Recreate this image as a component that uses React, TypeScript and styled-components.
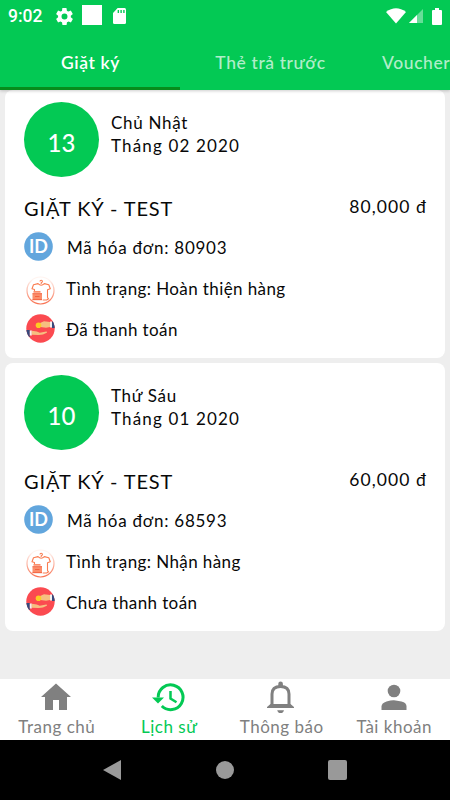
import React from 'react'
import styled, { createGlobalStyle } from 'styled-components'

const GREEN = '#03c954'

const GlobalStyle = createGlobalStyle`
  * {
    box-sizing: border-box;
  }

  body {
    margin: 0;
    background: #eeeeee;
    font-family: Lato, 'Open Sans', sans-serif;
  }

  svg {
    display: block;
    flex: none;
  }
`

const Screen = styled.div`
  width: 450px;
  height: 800px;
  display: flex;
  flex-direction: column;
  overflow: hidden;
  background: #eeeeee;
`

const Header = styled.header`
  position: relative;
  height: 90px;
  background: ${GREEN};
  box-shadow: 0 1px 3px rgba(0, 0, 0, 0.2);
`

const StatusBar = styled.div`
  height: 32px;
  padding: 0 8px;
  display: flex;
  align-items: center;
  justify-content: space-between;
  color: #fff;
`

const StatusGroup = styled.div<{ $gap: number }>`
  display: flex;
  align-items: center;
  gap: ${({ $gap }) => $gap}px;
`

const Clock = styled.span`
  width: 35px;
  margin-right: 3px;
  font: 500 17.5px/32px Roboto, sans-serif;
  white-space: nowrap;
`

const Notice = styled.span`
  width: 20px;
  height: 20px;
  margin: -2px 1px 0 -1px;
  background: #fff;
`

const Tabs = styled.nav`
  height: 58px;
  display: flex;
  overflow: hidden;
`

const Tab = styled.div<{ $active?: boolean; $clipped?: boolean }>`
  flex: none;
  width: 180px;
  padding: 3px 0 0 ${({ $clipped }) => ($clipped ? '22px' : '1px')};
  text-align: ${({ $clipped }) => ($clipped ? 'left' : 'center')};
  border-bottom: 3px solid ${({ $active }) => ($active ? '#078d1c' : 'transparent')};
  color: ${({ $active }) => ($active ? '#fff' : 'rgba(255, 255, 255, 0.7)')};
  font-size: 17.5px;
  font-weight: ${({ $active }) => ($active ? 600 : 500)};
  line-height: 56px;
  letter-spacing: 0.6px;
  white-space: nowrap;
`

const List = styled.main`
  flex: 1;
  padding: 0 5px;
  display: flex;
  flex-direction: column;
  gap: 5px;
`

const Card = styled.section`
  height: 268px;
  padding: 12px 19px 0;
  border-radius: 8px;
  background: #fff;
  color: #080808;
`

const CardHead = styled.div`
  display: flex;
  gap: 12px;
`

const Day = styled.div`
  width: 75px;
  height: 75px;
  padding-top: 5px;
  border-radius: 50%;
  background: ${GREEN};
  color: #fff;
  font-size: 24px;
  font-weight: 500;
  line-height: 72px;
  text-align: center;
`

const DateText = styled.div`
  padding-top: 10px;
  font-size: 17px;
  line-height: 22.5px;
  letter-spacing: 0.7px;
`

const Month = styled.div`
  letter-spacing: 1.15px;
`

const TitleRow = styled.div`
  height: 38px;
  margin-top: 12px;
  display: flex;
  justify-content: space-between;
  line-height: 38px;
`

const Title = styled.span`
  font-size: 20px;
  letter-spacing: 0.9px;
`

const Price = styled.span`
  margin-right: -1px;
  font-size: 17.5px;
  line-height: 36px;
  letter-spacing: 1.1px;
`

const Row = styled.div<{ $inset: number; $gap: number; $lift?: number }>`
  height: 41px;
  padding-left: ${({ $inset }) => $inset}px;
  display: flex;
  align-items: center;
  gap: ${({ $gap }) => $gap}px;

  svg {
    margin-top: ${({ $lift = 0 }) => $lift}px;
  }
`

const RowText = styled.span<{ $spacing?: number }>`
  font-size: 17px;
  line-height: 24px;
  letter-spacing: ${({ $spacing = 0.4 }) => $spacing}px;
  white-space: nowrap;
`

const BottomNav = styled.nav`
  height: 61px;
  display: grid;
  grid-template-columns: repeat(4, 112.5px);
  background: #fff;
`

const NavItem = styled.div<{ $active?: boolean }>`
  display: flex;
  flex-direction: column;
  align-items: center;
  padding-top: 2px;
  color: ${({ $active }) => ($active ? GREEN : '#808080')};
`

const NavLabel = styled.span`
  padding-left: 1px;
  font-size: 17px;
  line-height: 24px;
  letter-spacing: 0.5px;
  white-space: nowrap;
`

const SystemBar = styled.div`
  height: 60px;
  padding: 0 56px;
  display: grid;
  grid-template-columns: repeat(3, 1fr);
  align-items: center;
  justify-items: center;
  background: #000;
`

const GearIcon = () => (
  <svg width="17" height="17" viewBox="2 2 20 20" fill="#fff">
    <path d="M19.4 13a7.8 7.8 0 0 0 0-2l2.1-1.6c.2-.2.2-.4.1-.7l-2-3.4c-.1-.2-.4-.3-.6-.2l-2.500 1a7.300 7.300 0 0 0-1.700-1L14.400 2.400a.5.5 0 0 0-.5-.4h-4c-.2 0-.4.2-.5.4L9.100 5.100a7.700 7.700 0 0 0-1.700 1l-2.500-1c-.2-.1-.5 0-.6.2l-2 3.400c-.1.200-.1.500.1.700L4.500 11a7.900 7.900 0 0 0 0 2l-2.100 1.600c-.2.200-.2.400-.1.700l2 3.400c.1.200.4.300.6.200l2.500-1c.5.400 1.100.700 1.700 1l.4 2.700c0 .200.200.400.500.400h4c.2 0 .5-.2.5-.4l.4-2.700a7.300 7.300 0 0 0 1.700-1l2.500 1c.2.100.5 0 .6-.2l2-3.400c.1-.2.100-.5-.1-.7zM12 15.500a3.500 3.500 0 1 1 0-7 3.500 3.500 0 0 1 0 7z" />
  </svg>
)

const SdCardIcon = () => (
  <svg width="13" height="16" viewBox="0 0 14 16" preserveAspectRatio="none">
    <path fill="#fff" d="M5 0h7.500Q14 0 14 1.500v13q0 1.500-1.500 1.500h-11Q0 16 0 14.500V5z" />
    <path fill={GREEN} d="M5 2h1.500v3H5zM8 2h1.500v3H8zM11 2h1.500v3H11z" />
  </svg>
)

const WifiIcon = () => (
  <svg width="20" height="16" viewBox="0 0 20 16">
    <path fill="#fff" d="M0 4Q10-3.500 20 4L10 15.500z" />
  </svg>
)

const SignalIcon = () => (
  <svg width="14" height="14" viewBox="0 0 14 14">
    <path fill="#fff" fillOpacity="0.4" d="M14 0v14H0z" />
    <path fill="#fff" d="M8 6v8H0z" />
  </svg>
)

const BatteryWrap = styled.span`
  margin-left: 6px;
`

const BatteryIcon = () => (
  <BatteryWrap>
    <svg width="10" height="17" viewBox="0 0 10 17">
      <path fill="#fff" d="M3 0h4v2h2q1 0 1 1v13q0 1-1 1H1q-1 0-1-1V3q0-1 1-1h2z" />
    </svg>
  </BatteryWrap>
)

const IdText = styled.text`
  font: 700 18px Lato, sans-serif;
`

const IdIcon = () => (
  <svg width="29" height="29" viewBox="0 0 29 29">
    <circle cx="14.500" cy="14.500" r="14.300" fill="#62a6dd" />
    <IdText x="14.500" y="20.700" textAnchor="middle" textLength="19" lengthAdjust="spacingAndGlyphs" fill="#fff">
      ID
    </IdText>
  </svg>
)

const LaundryIcon = () => (
  <svg width="29" height="29" viewBox="0 0 29 29">
    <defs>
      <linearGradient id="ring" x1="0" y1="0" x2="0" y2="1">
        <stop offset="0.1" stopColor="#fff3ef" />
        <stop offset="1" stopColor="#f8704f" />
      </linearGradient>
    </defs>
    <circle cx="14.500" cy="14.500" r="13.500" fill="#fff" stroke="url(#ring)" strokeWidth="1.200" />
    <g fill="none" stroke="#fa7c50" strokeWidth="1.100" strokeLinejoin="round">
      <path d="M14 5.500q0-1.300 1.200-1.300t1.200 1.300q0 .8-1.200 1.300v1.200" />
      <path d="M8.500 15.500v-2L6 12.800l1.500-4L12 7.600q3.200 3.200 6.400 0l4.400 1.200 1.500 4-2.800 1V21.500l1 1.300-1.800 1.200h-4" />
    </g>
    <path fill="#fb8e6b" d="M7.500 15h7v1.800h-7zM6.500 17.500h9.500V24H6.500z" />
    <path stroke="#f25d3b" strokeWidth="0.900" d="M6.500 17.700H16M6.500 23.700H16M9 20.500h4.500" />
  </svg>
)

const PaymentIcon = () => (
  <svg width="29" height="29" viewBox="0 0 29 29">
    <defs>
      <clipPath id="disc">
        <circle cx="14.500" cy="14.500" r="14.200" />
      </clipPath>
    </defs>
    <g clipPath="url(#disc)">
      <path fill="#fb4a50" d="M0 0h29v29H0z" />
      <path fill="#354a7d" d="M26 7.500h3v6.500h-3zM0 16h3.800v7H0z" />
      <path fill="#f4f0ef" d="M24 7.500h2v6h-2zM3.800 16.500h2v5h-2z" />
      <path fill="#f6bf80" d="M24 8l-6-.8-4.500 2 1 3.800 5.500.7 4-.7zM5.800 16.800l5 .8 3 1.200 6.500-1.300q1.300.2.500 1.200-4 2.600-8.500 2.400l-6.500-.3z" />
      <circle cx="12.500" cy="11.200" r="2.800" fill="#fdcc22" />
    </g>
  </svg>
)

const HomeIcon = () => (
  <svg width="32" height="34" viewBox="0 0 32 34" fill="currentColor">
    <path d="M16 2.500L31 16h-4v13h-8V19h-6v10H5V16H1z" />
  </svg>
)

const HistoryIcon = () => (
  <svg width="34" height="34" viewBox="0 0 34 34" fill="none" stroke="currentColor">
    <path strokeWidth="3" d="M6.200 16.500A12.400 12.400 0 1 1 9.800 25" />
    <path fill="currentColor" stroke="none" d="M0 16.500h12l-6 6z" />
    <path strokeWidth="2.500" d="M18.500 10v7.500l6 3.700" />
  </svg>
)

const BellIcon = () => (
  <svg width="30" height="34" viewBox="0 0 30 34">
    <path
      fill="none"
      stroke="currentColor"
      strokeWidth="3"
      d="M6 25.500V13Q6 5.500 14.500 5.500T23 13v12.500"
    />
    <path
      fill="currentColor"
      d="M12.300 5V2.800a2.300 2.300 0 0 1 4.600 0V5zM4.500 23h20l3.500 3v1H1v-1zM11.200 29.200h6.800q-.8 2.900-3.400 2.900t-3.400-2.900z"
    />
  </svg>
)

const PersonIcon = () => (
  <svg width="28" height="34" viewBox="0 0 28 34" fill="currentColor">
    <circle cx="14" cy="10" r="6.300" />
    <path d="M1.500 29v-3.500q0-3.500 5-5t7.500-1.300 7.500 1.300 5 5V29z" />
  </svg>
)

const orders = [
  {
    day: '13',
    weekday: 'Chủ Nhật',
    month: 'Tháng 02 2020',
    price: '80,000 đ',
    code: '80903',
    status: 'Hoàn thiện hàng',
    payment: 'Đã thanh toán',
  },
  {
    day: '10',
    weekday: 'Thứ Sáu',
    month: 'Tháng 01 2020',
    price: '60,000 đ',
    code: '68593',
    status: 'Nhận hàng',
    payment: 'Chưa thanh toán',
  },
]

const navItems = [
  { label: 'Trang chủ', icon: <HomeIcon /> },
  { label: 'Lịch sử', icon: <HistoryIcon />, active: true },
  { label: 'Thông báo', icon: <BellIcon /> },
  { label: 'Tài khoản', icon: <PersonIcon /> },
]

const OrderCard = ({ order }: { order: (typeof orders)[number] }) => (
  <Card>
    <CardHead>
      <Day>{order.day}</Day>
      <DateText>
        <div>{order.weekday}</div>
        <Month>{order.month}</Month>
      </DateText>
    </CardHead>
    <TitleRow>
      <Title>GIẶT KÝ - TEST</Title>
      <Price>{order.price}</Price>
    </TitleRow>
    <Row $inset={0} $gap={14} $lift={-2}>
      <IdIcon />
      <RowText $spacing={0.75}>Mã hóa đơn: {order.code}</RowText>
    </Row>
    <Row $inset={2} $gap={11} $lift={4}>
      <LaundryIcon />
      <RowText>Tình trạng: {order.status}</RowText>
    </Row>
    <Row $inset={2} $gap={11} $lift={-3}>
      <PaymentIcon />
      <RowText>{order.payment}</RowText>
    </Row>
  </Card>
)

const App = () => {
  return (
    <>
      <GlobalStyle />
      <Screen>
        <Header>
          <StatusBar>
            <StatusGroup $gap={10}>
              <Clock>9:02</Clock>
              <GearIcon />
              <Notice />
              <SdCardIcon />
            </StatusGroup>
            <StatusGroup $gap={3}>
              <WifiIcon />
              <SignalIcon />
              <BatteryIcon />
            </StatusGroup>
          </StatusBar>
          <Tabs>
            <Tab $active>Giặt ký</Tab>
            <Tab>Thẻ trả trước</Tab>
            <Tab $clipped>Voucher</Tab>
          </Tabs>
        </Header>
        <List>
          {orders.map((order) => (
            <OrderCard key={order.code} order={order} />
          ))}
        </List>
        <BottomNav>
          {navItems.map(({ label, icon, active }) => (
            <NavItem key={label} $active={active}>
              {icon}
              <NavLabel>{label}</NavLabel>
            </NavItem>
          ))}
        </BottomNav>
        <SystemBar>
          <svg width="18" height="20" viewBox="0 0 18 20" fill="#999">
            <path d="M18 0v20L0 10z" />
          </svg>
          <svg width="18" height="18" viewBox="0 0 18 18" fill="#999">
            <circle cx="9" cy="9" r="9" />
          </svg>
          <svg width="19" height="20" viewBox="0 0 19 20" fill="#999">
            <rect width="19" height="20" rx="2" />
          </svg>
        </SystemBar>
      </Screen>
    </>
  )
}

export default App
